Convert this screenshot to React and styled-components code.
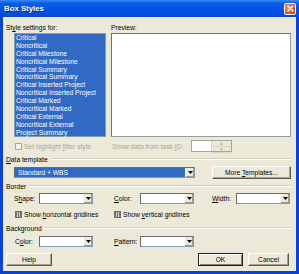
import React from "react";
import styled, { createGlobalStyle } from "styled-components";

const GlobalStyle = createGlobalStyle`
  html, body {
    margin: 0;
    padding: 0;
    background: #ece9d8;
  }
  body {
    font-family: "Liberation Sans", Arial, sans-serif;
    font-size: 6.7px;
    color: #000;
  }
`;

const STYLES = [
  "Critical",
  "Noncritical",
  "Critical Milestone",
  "Noncritical Milestone",
  "Critical Summary",
  "Noncritical Summary",
  "Critical Inserted Project",
  "Noncritical Inserted Project",
  "Critical Marked",
  "Noncritical Marked",
  "Critical External",
  "Noncritical External",
  "Project Summary",
];

function BoxStylesDialog() {
  return (
    <Window>
      <TitleBar>
        <span>Box Styles</span>
        <CloseButton>
          <svg width="7" height="7" viewBox="0 0 7 7">
            <path d="M1 1 L6 6 M6 1 L1 6" stroke="#fff" strokeWidth="1.4" strokeLinecap="round" />
          </svg>
        </CloseButton>
      </TitleBar>

      <Body>
        <TopGrid>
          <div>
            <Label>St<U>y</U>le settings for:</Label>
            <StyleList>
              {STYLES.map((s) => (
                <li key={s}>{s}</li>
              ))}
            </StyleList>
          </div>
          <div>
            <Label>Preview:</Label>
            <PreviewBox />
          </div>
        </TopGrid>

        <TopGrid $row>
          <CheckRow $indent={9} $disabled>
            <Check />
            <span>Set highlight <U>f</U>ilter style</span>
          </CheckRow>
          <TaskRow>
            <span>Show data from task <U>I</U>D:</span>
            <Spinner>
              <div />
              <SpinButtons>
                <span>▴</span>
                <span>▾</span>
              </SpinButtons>
            </Spinner>
          </TaskRow>
        </TopGrid>

        <GroupHeader $top={3}>
          <span><U>D</U>ata template</span>
        </GroupHeader>

        <TemplateRow>
          <Select $width={181} $selected>Standard + WBS</Select>
          <Button $width={79}>
            <span>More <U>T</U>emplates...</span>
          </Button>
        </TemplateRow>

        <GroupHeader $top={4}>
          <span>Border</span>
        </GroupHeader>

        <FieldRow $top={3}>
          <Field $width={100}>
            <FieldLabel $width={25}>S<U>h</U>ape:</FieldLabel>
            <Select $width={54} />
          </Field>
          <Field $width={98}>
            <FieldLabel $width={26}><U>C</U>olor:</FieldLabel>
            <Select $width={54} />
          </Field>
          <Field $width={78}>
            <FieldLabel $width={24}><U>W</U>idth:</FieldLabel>
            <Select $width={54} />
          </Field>
        </FieldRow>

        <FieldRow $top={5}>
          <Field $width={100}>
            <CheckRow $indent={1}>
              <Check $checked />
              <span>Show <U>h</U>orizontal gridlines</span>
            </CheckRow>
          </Field>
          <Field $width={98}>
            <CheckRow $indent={0}>
              <Check $checked />
              <span>Show <U>v</U>ertical gridlines</span>
            </CheckRow>
          </Field>
        </FieldRow>

        <GroupHeader $top={4}>
          <span>Background</span>
        </GroupHeader>

        <FieldRow $top={4}>
          <Field $width={100}>
            <FieldLabel $width={25} $indent={1}>C<U>o</U>lor:</FieldLabel>
            <Select $width={54} />
          </Field>
          <Field $width={98}>
            <FieldLabel $width={26}><U>P</U>attern:</FieldLabel>
            <Select $width={54} />
          </Field>
        </FieldRow>

        <ButtonRow>
          <Button $width={46}>Help</Button>
          <Button $width={45} $default style={{ marginLeft: "auto" }}>OK</Button>
          <Button $width={41}>Cancel</Button>
        </ButtonRow>
      </Body>
    </Window>
  );
}

export default function App() {
  return (
    <>
      <GlobalStyle />
      <BoxStylesDialog />
    </>
  );
}

const Window = styled.div`
  width: 299px;
  height: 274px;
  box-sizing: border-box;
  display: flex;
  flex-direction: column;
  background: #0842d6;
  padding: 0 3px 3px 3px;
`;

const TitleBar = styled.div`
  height: 17px;
  margin: 0 -3px;
  padding: 0 3px 0 4px;
  display: flex;
  align-items: center;
  justify-content: space-between;
  background: linear-gradient(#3b8cf5 0%, #0a5de8 18%, #0054e3 55%, #004fd8 85%, #0846c8 100%);
  color: #fff;
  font-weight: bold;
  font-size: 7.8px;
  text-shadow: 1px 1px #0a2a90;
`;

const CloseButton = styled.div`
  width: 12px;
  height: 12px;
  box-sizing: border-box;
  border: 1px solid #fff;
  border-radius: 2px;
  background: radial-gradient(circle at 35% 35%, #f29a78, #e0502a 60%, #c13e18);
  display: flex;
  align-items: center;
  justify-content: center;
`;

const Body = styled.div`
  flex: 1;
  background: #ece9d8;
  padding: 7px 5px 0 3px;
  display: flex;
  flex-direction: column;
`;

const U = styled.span`
  text-decoration: underline;
`;

const Label = styled.div`
  height: 8px;
  line-height: 8px;
  margin-bottom: 1px;
  white-space: nowrap;
`;

const TopGrid = styled.div`
  display: grid;
  grid-template-columns: 105px 1fr;
  margin-top: ${(p) => (p.$row ? "3px" : "0")};
  height: ${(p) => (p.$row ? "12px" : "auto")};
  align-items: ${(p) => (p.$row ? "center" : "start")};
`;

const StyleList = styled.ul`
  list-style: none;
  margin: 0 0 0 8px;
  padding: 0 1px;
  width: 92px;
  height: 104px;
  box-sizing: border-box;
  background: #316ac5;
  color: #fff;
  border: 1px solid #7f9db9;

  li {
    height: 7.9px;
    line-height: 7.9px;
    white-space: nowrap;
  }
`;

const PreviewBox = styled.div`
  width: 180px;
  height: 104px;
  box-sizing: border-box;
  background: #fff;
  border: 1px solid #6f6f6f;
  border-right-color: #9a9a9a;
  border-bottom-color: #9a9a9a;
`;

const CheckRow = styled.div`
  display: flex;
  align-items: center;
  gap: 2px;
  padding-left: ${(p) => p.$indent}px;
  color: ${(p) => (p.$disabled ? "#aca899" : "#000")};
  white-space: nowrap;
`;

const Check = styled.span`
  width: 7px;
  height: 7px;
  box-sizing: border-box;
  border: 1px solid ${(p) => (p.$checked ? "#6e6d68" : "#a9a696")};
  background: ${(p) =>
    p.$checked
      ? "repeating-linear-gradient(90deg, #7c7b76 0 1px, #c9c7bd 1px 2px)"
      : "#f4f3ee"};
  flex: none;
`;

const TaskRow = styled.div`
  display: flex;
  align-items: center;
  padding-left: 1px;
  color: #aca899;
  white-space: nowrap;

  > span {
    width: 79px;
  }
`;

const Spinner = styled.div`
  width: 41px;
  height: 12px;
  box-sizing: border-box;
  border: 1px solid #a9a696;
  background: #fff;
  display: flex;

  > div {
    flex: 1;
  }
`;

const SpinButtons = styled.div`
  width: 12px;
  display: flex;
  flex-direction: column;
  background: #ece9d8;
  border-left: 1px solid #d8d5c6;

  span {
    flex: 1;
    font-size: 5px;
    line-height: 5px;
    text-align: center;
    color: #aca899;
    border-bottom: 1px solid #d8d5c6;
  }
`;

const GroupHeader = styled.div`
  display: flex;
  align-items: center;
  height: 8px;
  margin-top: ${(p) => p.$top}px;
  white-space: nowrap;

  &::after {
    content: "";
    flex: 1;
    margin-left: 3px;
    border-top: 1px solid #d0d0bf;
    border-bottom: 1px solid #fff;
  }
`;

const TemplateRow = styled.div`
  display: flex;
  align-items: center;
  justify-content: space-between;
  margin-top: 3px;
  padding-left: 8px;
  height: 12px;
`;

const Select = styled.div`
  width: ${(p) => p.$width}px;
  height: 11px;
  box-sizing: border-box;
  border: 1px solid #7f9db9;
  border-top-color: #6b6b6b;
  border-left-color: #6b6b6b;
  background: ${(p) => (p.$selected ? "#316ac5" : "#fff")};
  color: #fff;
  display: flex;
  align-items: center;
  padding-left: 3px;
  position: relative;
  white-space: nowrap;

  &::after {
    content: "";
    position: absolute;
    right: 0;
    top: 0;
    bottom: 0;
    width: 8px;
    background: #ece9d8 no-repeat center / 5px 3px
      url("data:image/svg+xml,%3Csvg xmlns='http://www.w3.org/2000/svg' viewBox='0 0 5 3'%3E%3Cpath d='M0 0h5L2.5 3z' fill='%23000'/%3E%3C/svg%3E");
    border-left: 1px solid #fff;
    box-shadow: inset -1px -1px #9c9a90;
  }
`;

const FieldRow = styled.div`
  display: flex;
  align-items: center;
  margin-top: ${(p) => p.$top}px;
  padding-left: 8px;
  height: 11px;
`;

const Field = styled.div`
  width: ${(p) => p.$width}px;
  display: flex;
  align-items: center;
`;

const FieldLabel = styled.span`
  width: ${(p) => p.$width}px;
  padding-left: ${(p) => p.$indent || 0}px;
  box-sizing: border-box;
  white-space: nowrap;
`;

const Button = styled.div`
  width: ${(p) => p.$width}px;
  height: 13px;
  box-sizing: border-box;
  display: flex;
  align-items: center;
  justify-content: center;
  white-space: nowrap;
  background: #ece9d8;
  border: 1px solid;
  border-color: ${(p) => (p.$default ? "#1f1f1f" : "#fff #5a5a5a #5a5a5a #fff")};
  box-shadow: ${(p) =>
    p.$default
      ? "inset 1px 1px #fff, inset -1px -1px #808080"
      : "inset -1px -1px #a5a294"};
`;

const ButtonRow = styled.div`
  display: flex;
  align-items: center;
  gap: 5px;
  margin-top: 6px;
  padding-right: 2px;
`;
